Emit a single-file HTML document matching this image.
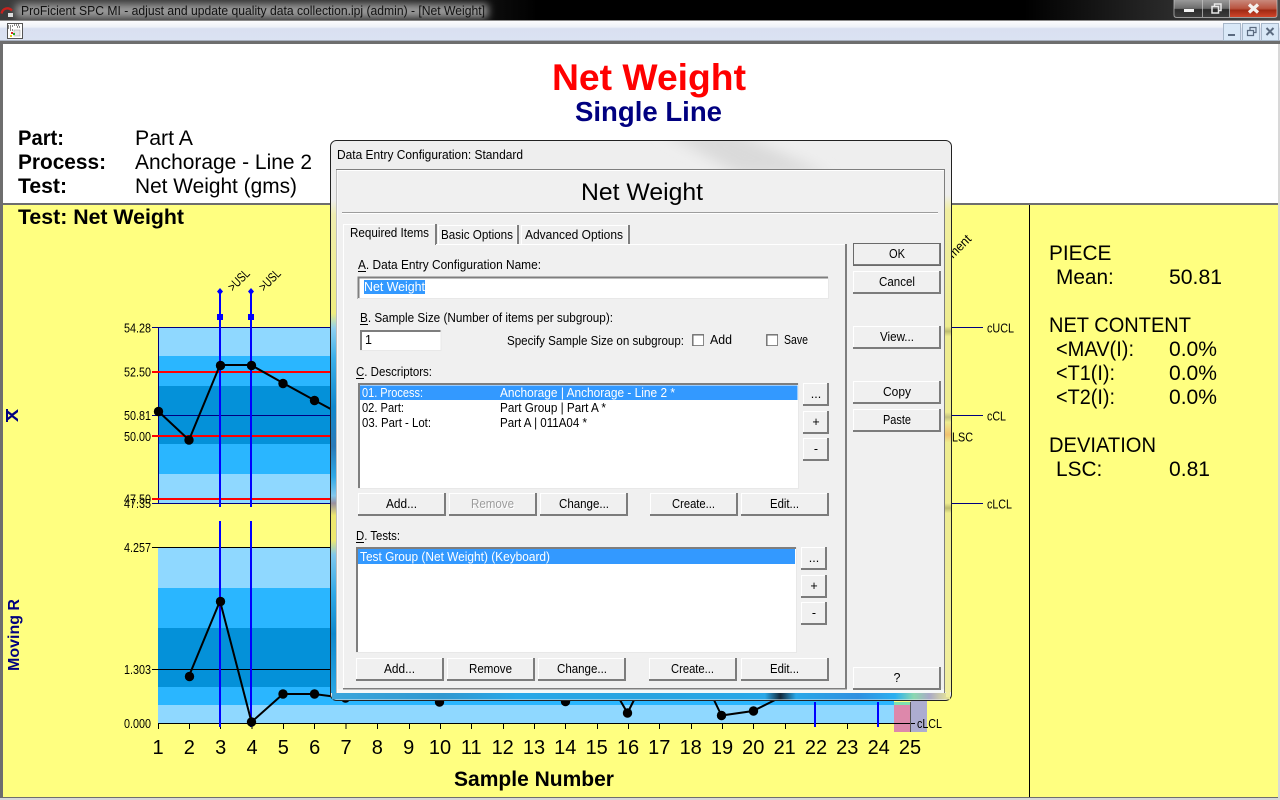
<!DOCTYPE html>
<html lang="en">
<head>
<meta charset="utf-8">
<title>ProFicient SPC MI - Net Weight</title>
<style>
html,body{margin:0;padding:0;width:1280px;height:800px;overflow:hidden;background:#fff}
svg{display:block;position:absolute;left:0;top:0}
text{font-family:"Liberation Sans",sans-serif;white-space:pre}
.d{font-size:12.5px;fill:#000}
.c{text-anchor:middle}
.ax{font-size:13px;fill:#000}
.big{font-size:20.8px;fill:#000}
.r{font-size:20.8px;fill:#000}
.n{font-size:20px;fill:#000;text-anchor:middle}
.b{font-weight:bold}
</style>
</head>
<body>
<svg width="1280" height="800" viewBox="0 0 1280 800" xmlns="http://www.w3.org/2000/svg">
<defs>
<linearGradient id="tb" x1="0" x2="1" y1="0" y2="0">
<stop offset="0" stop-color="#3c3c3c"/><stop offset=".3" stop-color="#2a2a2a"/><stop offset=".42" stop-color="#000"/><stop offset=".8" stop-color="#000"/><stop offset="1" stop-color="#4a4a4a"/>
</linearGradient>
<linearGradient id="mb" x1="0" x2="0" y1="0" y2="1">
<stop offset="0" stop-color="#fbfcfe"/><stop offset=".3" stop-color="#eef1f8"/><stop offset=".38" stop-color="#d9e0f1"/><stop offset="1" stop-color="#dbe2f2"/>
</linearGradient>
<linearGradient id="wb" x1="0" x2="0" y1="0" y2="1">
<stop offset="0" stop-color="#9a9a9a"/><stop offset=".5" stop-color="#6c6c6c"/><stop offset=".55" stop-color="#2c2c2c"/><stop offset="1" stop-color="#3c3c3c"/>
</linearGradient>
<linearGradient id="wc" x1="0" x2="0" y1="0" y2="1">
<stop offset="0" stop-color="#c9897c"/><stop offset=".5" stop-color="#b9533f"/><stop offset=".6" stop-color="#a02a14"/><stop offset="1" stop-color="#d0452a"/>
</linearGradient>
<linearGradient id="ls" x1="0" x2="0" y1="200" y2="693" gradientUnits="userSpaceOnUse">
<stop offset="0" stop-color="#eeeeee"/><stop offset=".03" stop-color="#efedb0"/><stop offset=".23" stop-color="#f0ee80"/><stop offset=".26" stop-color="#8fd0f0"/><stop offset=".32" stop-color="#3cb0ea"/><stop offset=".42" stop-color="#1288cc"/><stop offset=".5" stop-color="#2a7ab8"/><stop offset=".56" stop-color="#2ea8e6"/><stop offset=".6" stop-color="#84c8ec"/><stop offset=".615" stop-color="#9a90a0"/><stop offset=".64" stop-color="#eee870"/><stop offset=".69" stop-color="#eee870"/><stop offset=".72" stop-color="#80c8ee"/><stop offset=".8" stop-color="#2fa8e6"/><stop offset=".88" stop-color="#0f88cc"/><stop offset="1" stop-color="#2aa6e4"/>
</linearGradient>
<linearGradient id="rs" x1="0" x2="0" y1="195" y2="700" gradientUnits="userSpaceOnUse">
<stop offset="0" stop-color="#eeeeee"/><stop offset=".03" stop-color="#f0eea0"/><stop offset=".26" stop-color="#eeec90"/><stop offset=".27" stop-color="#bdbb70"/><stop offset=".28" stop-color="#eeec90"/><stop offset=".43" stop-color="#eeec90"/><stop offset=".44" stop-color="#c2c080"/><stop offset=".45" stop-color="#eeec90"/><stop offset=".475" stop-color="#f0c070"/><stop offset=".49" stop-color="#eeec90"/><stop offset=".61" stop-color="#eeec90"/><stop offset=".62" stop-color="#bdbb70"/><stop offset=".63" stop-color="#eeec90"/><stop offset="1" stop-color="#f0eea0"/>
</linearGradient>
<linearGradient id="bs" x1="331" x2="951" y1="0" y2="0" gradientUnits="userSpaceOnUse">
<stop offset="0" stop-color="#3aa6dc"/><stop offset=".18" stop-color="#2f98d0"/><stop offset=".3" stop-color="#2aa8e8"/><stop offset=".5" stop-color="#2aa4e0"/><stop offset=".7" stop-color="#2aa8e8"/><stop offset=".725" stop-color="#10283a"/><stop offset=".75" stop-color="#2aa8e8"/><stop offset=".85" stop-color="#2f90e0"/><stop offset=".91" stop-color="#2ab0f0"/><stop offset=".94" stop-color="#8cd8b0"/><stop offset=".965" stop-color="#aaaac8"/><stop offset="1" stop-color="#eeec90"/>
</linearGradient>
<filter id="bl" x="-20%" y="-60%" width="140%" height="220%"><feGaussianBlur stdDeviation="4"/></filter>
<filter id="bl2" x="-30%" y="-60%" width="160%" height="220%"><feGaussianBlur stdDeviation="7"/></filter>
<clipPath id="dtop"><rect x="331" y="141" width="620" height="28"/></clipPath>
<g id="btn">
<rect width="88" height="23" fill="#f0f0f0"/>
<path d="M0 0H88V1H1V23H0Z" fill="#fff"/>
<path d="M0 23V21H86V0H88V23Z" fill="#7c7c7c"/>
</g>
<g id="sb">
<rect width="26" height="23" fill="#f0f0f0"/>
<path d="M0 0H26V1H1V23H0Z" fill="#fff"/>
<path d="M0 23V21H24V0H26V23Z" fill="#7c7c7c"/>
</g>
</defs>

<!-- Title bar -->
<rect x="0" y="0" width="1280" height="21" fill="url(#tb)"/>
<rect x="16" y="4" width="472" height="14" fill="#9a9a9a" filter="url(#bl)"/>
<path d="M1.500 13.500C2.500 8.500 8 6.500 12 10.500" fill="none" stroke="#c8211d" stroke-width="2.400"/>
<rect x="8" y="13" width="5" height="4" fill="#dcdcdc"/>
<text x="21" y="15" font-size="12.500" fill="#111" textLength="464" lengthAdjust="spacingAndGlyphs">ProFicient SPC MI - adjust and update quality data collection.ipj (admin) - [Net Weight]</text>
<rect x="1174" y="0" width="29" height="17" fill="url(#wb)"/>
<rect x="1203" y="0" width="27" height="17" fill="url(#wb)"/>
<rect x="1230" y="0" width="47" height="17" fill="url(#wc)"/>
<path d="M1174 0V15Q1174 17.500 1177 17.500H1274Q1277 17.500 1277 15V0M1202.500 0V17M1229.500 0V17" fill="none" stroke="#c8c8c8" stroke-opacity=".7"/>
<rect x="1184" y="9" width="10" height="3" fill="#f2f2f2"/>
<path d="M1212 6.500h6.500v6.500h-6.500zM1214.500 6.500v-2.500h6.500v6.500h-2.500" fill="none" stroke="#e8e8e8" stroke-width="1.500"/>
<path d="M1249 4.500l9 8M1258 4.500l-9 8" stroke="#f4f0ee" stroke-width="3.200"/>
<rect x="0" y="20" width="1280" height="1" fill="#8a8a8a"/>

<!-- Menu bar -->
<rect x="0" y="21" width="1280" height="20" fill="url(#mb)"/>
<rect x="0" y="40" width="1280" height="1" fill="#a9b1c0"/>
<rect x="7.500" y="23.500" width="15" height="15" fill="#fff" stroke="#555"/>
<path d="M8 26h5M8 28h3M14 25h6M10 30h4M17 27h3" stroke="#111" stroke-dasharray="1 1"/>
<rect x="14" y="30" width="6" height="6" fill="#e8e8e8" stroke="#999" stroke-width=".5"/>
<rect x="11" y="32" width="2" height="2" fill="#d22"/><rect x="13" y="33" width="2" height="2" fill="#2a2"/><rect x="10" y="35" width="2" height="2" fill="#dc2"/>
<g fill="#d9e8f7" stroke="#a7b7c9">
<rect x="1223.500" y="23.500" width="17" height="17"/>
<rect x="1242.500" y="23.500" width="17" height="17"/>
<rect x="1261.500" y="23.500" width="17" height="17"/>
</g>
<rect x="1228" y="34" width="7" height="2" fill="#5b6b80"/>
<path d="M1247.500 30.500h6v5h-6zM1250 30v-2.500h6v5h-2.500" fill="none" stroke="#5b6b80" stroke-width="1.200"/>
<path d="M1266.500 28l7 7M1273.500 28l-7 7" stroke="#5b6b80" stroke-width="2"/>

<!-- Workspace -->
<rect x="0" y="41" width="1280" height="759" fill="#6e6e6e"/>
<rect x="3" y="44" width="1275" height="159" fill="#fff"/>
<rect x="3" y="205" width="1275" height="592" fill="#ffff80"/>
<rect x="1278" y="44" width="2" height="756" fill="#d8d8d8"/>
<rect x="0" y="798" width="1280" height="2" fill="#d8d8d8"/>
<rect x="1029" y="205" width="1" height="592" fill="#000"/>

<!-- Header -->
<text x="552" y="90" font-size="37.500" font-weight="bold" fill="#ff0000" textLength="194" lengthAdjust="spacingAndGlyphs">Net Weight</text>
<text x="575" y="121" font-size="28" font-weight="bold" fill="#000080" textLength="147" lengthAdjust="spacingAndGlyphs">Single Line</text>
<text x="18" y="145" class="big b" textLength="46" lengthAdjust="spacingAndGlyphs">Part:</text>
<text x="135" y="145" class="big" textLength="58" lengthAdjust="spacingAndGlyphs">Part A</text>
<text x="18" y="169" class="big b" textLength="88" lengthAdjust="spacingAndGlyphs">Process:</text>
<text x="135" y="169" class="big" textLength="177" lengthAdjust="spacingAndGlyphs">Anchorage - Line 2</text>
<text x="18" y="193" class="big b" textLength="49" lengthAdjust="spacingAndGlyphs">Test:</text>
<text x="135" y="193" class="big" textLength="162" lengthAdjust="spacingAndGlyphs">Net Weight (gms)</text>
<text x="18" y="224" font-size="21" class="b" fill="#000" textLength="166" lengthAdjust="spacingAndGlyphs">Test: Net Weight</text>

<!-- Upper chart -->
<rect x="158" y="327" width="787" height="29" fill="#8fd8ff"/>
<rect x="158" y="356" width="787" height="30" fill="#2ab6ff"/>
<rect x="158" y="386" width="787" height="58" fill="#0491d9"/>
<rect x="158" y="444" width="787" height="30" fill="#2ab6ff"/>
<rect x="158" y="474" width="787" height="29" fill="#8fd8ff"/>
<path d="M152 327.500H945M152 415.500H945M152 503.500H945M158.500 327V504" stroke="#000080" fill="none"/>
<path d="M152 372H945M152 436H945M152 499H945" stroke="#ff0000" stroke-width="2" fill="none"/>

<!-- Lower chart backgrounds -->
<rect x="158" y="547" width="736" height="41" fill="#8fd8ff"/>
<rect x="158" y="588" width="736" height="40" fill="#2ab6ff"/>
<rect x="158" y="628" width="736" height="59" fill="#0491d9"/>
<rect x="158" y="687" width="736" height="18" fill="#2ab6ff"/>
<rect x="158" y="705" width="736" height="18" fill="#8fd8ff"/>
<rect x="894" y="702" width="16.500" height="3" fill="#80e0b0"/>
<rect x="894" y="705" width="16.500" height="27" fill="#dd88ab"/>
<rect x="910.500" y="700" width="16.500" height="32" fill="#adadd0"/>
<path d="M152 547.500H900M152 669.500H900M158 723.500H915" stroke="#000" fill="none"/>
<path d="M910.500 702V732" stroke="#555"/>
<path d="M158.500 723V729M189.500 723V729M220.500 723V729M252 723V729M283.500 723V729M314.500 723V729M346 723V729M377.500 723V729M409.500 723V729M440.500 723V729M471.500 723V729M503.500 723V729M534.500 723V729M565.500 723V729M597.500 723V729M628.500 723V729M659.500 723V729M691.500 723V729M722.500 723V729M753.500 723V729M785.500 723V729M847.500 723V729" stroke="#000"/>

<!-- Blue event lines (under the data lines) -->
<path d="M220 291V507M251 291V507M220 521V727M251 521V727" stroke="#0000ff" stroke-width="2" fill="none"/>
<path d="M815 702V727M878 702V727" stroke="#0000ff" stroke-width="2"/>
<path d="M220 288l3 3.500-3 3.500-3-3.500zM251 288l3 3.500-3 3.500-3-3.500z" fill="#0000ff"/>
<rect x="217" y="314" width="6" height="6" fill="#0000ff"/><rect x="248" y="314" width="6" height="6" fill="#0000ff"/>

<!-- Upper data -->
<polyline points="158,411 189,440 220,365 251,365 283,383 314,400 340,414" fill="none" stroke="#000" stroke-width="2"/>
<g fill="#000"><circle cx="158.500" cy="411.500" r="4.700"/><circle cx="189" cy="440" r="4.700"/><circle cx="220.500" cy="365.500" r="4.700"/><circle cx="251.500" cy="365.500" r="4.700"/><circle cx="283" cy="383.500" r="4.700"/><circle cx="314.500" cy="400.500" r="4.700"/></g>

<text transform="translate(233 292) rotate(-45)" class="ax" textLength="25" lengthAdjust="spacingAndGlyphs">&gt;USL</text>
<text transform="translate(264 292) rotate(-45)" class="ax" textLength="25" lengthAdjust="spacingAndGlyphs">&gt;USL</text>
<text transform="translate(953 259) rotate(-45)" class="ax" textLength="27" lengthAdjust="spacingAndGlyphs">ment</text>
<text x="124" y="332.500" class="ax" textLength="27" lengthAdjust="spacingAndGlyphs">54.28</text>
<text x="124" y="376.500" class="ax" textLength="27" lengthAdjust="spacingAndGlyphs">52.50</text>
<text x="124" y="420" class="ax" textLength="27" lengthAdjust="spacingAndGlyphs">50.81</text>
<text x="124" y="441" class="ax" textLength="27" lengthAdjust="spacingAndGlyphs">50.00</text>
<text x="124" y="503.500" class="ax" textLength="27" lengthAdjust="spacingAndGlyphs">47.50</text>
<text x="124" y="508" class="ax" textLength="27" lengthAdjust="spacingAndGlyphs">47.35</text>
<text transform="translate(18 422) rotate(-90)" font-size="17" font-weight="bold" fill="#000080" textLength="13" lengthAdjust="spacingAndGlyphs">X</text>
<rect x="6" y="409" width="2" height="13" fill="#000080"/>
<path d="M951 327.500H983M951 415.500H983M951 503.500H983" stroke="#000080"/>
<text x="987" y="332.500" class="ax" textLength="27" lengthAdjust="spacingAndGlyphs">cUCL</text>
<text x="987" y="420.500" class="ax" textLength="19" lengthAdjust="spacingAndGlyphs">cCL</text>
<text x="987" y="508.500" class="ax" textLength="25" lengthAdjust="spacingAndGlyphs">cLCL</text>
<text x="952" y="441.500" class="ax" textLength="21" lengthAdjust="spacingAndGlyphs">LSC</text>

<!-- Lower data -->
<polyline points="189,676 220,601 251.500,722 283,694 314,694 345,698" fill="none" stroke="#000" stroke-width="2"/>
<path d="M620 700L627.500 713L634 700M714 700L721.500 715.500L753 711L775 700" fill="none" stroke="#000" stroke-width="2"/>
<g fill="#000"><circle cx="189.500" cy="676.500" r="4.700"/><circle cx="220.500" cy="601.500" r="4.700"/><circle cx="251.500" cy="722" r="4.700"/><circle cx="283" cy="694" r="4.700"/><circle cx="314.500" cy="694" r="4.700"/><circle cx="345.500" cy="698" r="4.700"/><circle cx="439.500" cy="702" r="4.700"/><circle cx="565.500" cy="701.500" r="4.700"/><circle cx="627.500" cy="713" r="4.700"/><circle cx="721.500" cy="715.500" r="4.700"/><circle cx="753.500" cy="711" r="4.700"/></g>
<text x="124" y="552" class="ax" textLength="27" lengthAdjust="spacingAndGlyphs">4.257</text>
<text x="124" y="674" class="ax" textLength="27" lengthAdjust="spacingAndGlyphs">1.303</text>
<text x="124" y="728" class="ax" textLength="27" lengthAdjust="spacingAndGlyphs">0.000</text>
<text x="917" y="728" class="ax" textLength="25" lengthAdjust="spacingAndGlyphs">cLCL</text>
<text transform="translate(19 671) rotate(-90)" font-size="16" font-weight="bold" fill="#000080" textLength="72" lengthAdjust="spacingAndGlyphs">Moving R</text>
<text x="158" y="754" class="n">1</text><text x="189.300" y="754" class="n">2</text><text x="220.700" y="754" class="n">3</text><text x="252" y="754" class="n">4</text><text x="283.300" y="754" class="n">5</text><text x="314.700" y="754" class="n">6</text><text x="346" y="754" class="n">7</text><text x="377.300" y="754" class="n">8</text><text x="408.700" y="754" class="n">9</text><text x="440" y="754" class="n">10</text><text x="471.300" y="754" class="n">11</text><text x="502.700" y="754" class="n">12</text><text x="534" y="754" class="n">13</text><text x="565.300" y="754" class="n">14</text><text x="596.700" y="754" class="n">15</text><text x="628" y="754" class="n">16</text><text x="659.300" y="754" class="n">17</text><text x="690.700" y="754" class="n">18</text><text x="722" y="754" class="n">19</text><text x="753.300" y="754" class="n">20</text><text x="784.700" y="754" class="n">21</text><text x="816" y="754" class="n">22</text><text x="847.300" y="754" class="n">23</text><text x="878.700" y="754" class="n">24</text><text x="910" y="754" class="n">25</text>
<text x="454" y="786" font-size="21" font-weight="bold" fill="#000" textLength="160" lengthAdjust="spacingAndGlyphs">Sample Number</text>

<!-- Right stats -->
<text x="1049" y="260" class="r">PIECE</text>
<text x="1056" y="284" class="r">Mean:</text><text x="1169" y="284" class="r" textLength="53" lengthAdjust="spacingAndGlyphs">50.81</text>
<text x="1049" y="332" class="r" textLength="142" lengthAdjust="spacingAndGlyphs">NET CONTENT</text>
<text x="1056" y="356" class="r" textLength="78" lengthAdjust="spacingAndGlyphs">&lt;MAV(I):</text><text x="1169" y="356" class="r" textLength="48" lengthAdjust="spacingAndGlyphs">0.0%</text>
<text x="1056" y="380" class="r" textLength="59" lengthAdjust="spacingAndGlyphs">&lt;T1(I):</text><text x="1169" y="380" class="r" textLength="48" lengthAdjust="spacingAndGlyphs">0.0%</text>
<text x="1056" y="404" class="r" textLength="59" lengthAdjust="spacingAndGlyphs">&lt;T2(I):</text><text x="1169" y="404" class="r" textLength="48" lengthAdjust="spacingAndGlyphs">0.0%</text>
<text x="1049" y="452" class="r" textLength="107" lengthAdjust="spacingAndGlyphs">DEVIATION</text>
<text x="1056" y="476" class="r">LSC:</text><text x="1169" y="476" class="r" textLength="41" lengthAdjust="spacingAndGlyphs">0.81</text>

<!-- Dialog frame -->
<rect x="330.500" y="140.500" width="621" height="560" rx="6" ry="6" fill="#eeeeee" stroke="#222"/>
<g clip-path="url(#dtop)"><path d="M660 130L730 130L830 175L740 175Z" fill="#dadada" filter="url(#bl2)"/></g>
<rect x="331" y="198" width="5" height="495" fill="url(#ls)"/>
<rect x="945" y="195" width="6" height="497" fill="url(#rs)"/>
<rect x="332" y="693" width="618" height="6.500" fill="url(#bs)"/>
<rect x="946" y="692" width="4" height="5" fill="#f0eea0"/>
<text x="337" y="159" class="d" textLength="186" lengthAdjust="spacingAndGlyphs">Data Entry Configuration: Standard</text>

<!-- Dialog inner panel -->
<rect x="336" y="169" width="609" height="524" fill="#f0f0f0"/>
<rect x="337" y="689" width="607" height="4" fill="#f6f8f8"/>
<path d="M336.500 693V169.500H944.500V693" fill="none" stroke="#7e7e7e"/>
<path d="M337 693V170.500H944" fill="none" stroke="#fff"/>
<text x="581" y="200" font-size="24.500" fill="#000" textLength="122" lengthAdjust="spacingAndGlyphs">Net Weight</text>
<rect x="342" y="212" width="596" height="1" fill="#9d9d9d"/>
<rect x="342" y="213" width="596" height="1" fill="#fff"/>

<!-- Tabs and page -->
<path d="M343.500 245V224.500H435.500V245" fill="#f0f0f0" stroke="#fff"/>
<rect x="435" y="224" width="2" height="21" fill="#7e7e7e"/>
<path d="M438.500 245V225.500H517V245" fill="#f0f0f0" stroke="#fff"/>
<rect x="517" y="225" width="2" height="20" fill="#7e7e7e"/>
<path d="M521.500 245V225.500H628V245" fill="#f0f0f0" stroke="#fff"/>
<rect x="628" y="225" width="2" height="20" fill="#7e7e7e"/>
<path d="M436 244.500H845" stroke="#fff"/>
<rect x="343" y="245" width="1" height="443" fill="#fff"/>
<rect x="845" y="244" width="2" height="445" fill="#7e7e7e"/>
<rect x="343" y="688" width="504" height="1.500" fill="#7e7e7e"/>
<text x="350" y="237" class="d" textLength="79" lengthAdjust="spacingAndGlyphs">Required Items</text>
<text x="441" y="239" class="d" textLength="72" lengthAdjust="spacingAndGlyphs">Basic Options</text>
<text x="525" y="239" class="d" textLength="98" lengthAdjust="spacingAndGlyphs">Advanced Options</text>

<!-- A -->
<text x="358" y="269" class="d" textLength="183" lengthAdjust="spacingAndGlyphs">A. Data Entry Configuration Name:</text>
<rect x="358" y="271" width="8" height="1" fill="#000"/>
<rect x="358" y="277" width="471" height="22" fill="#fff"/>
<path d="M358.500 299V277.500H828" fill="none" stroke="#7e7e7e" stroke-width="2"/>
<path d="M358 298.500H828.500V277" fill="none" stroke="#e8e8e8"/>
<rect x="364" y="280" width="61" height="14" fill="#3399ff"/>
<text x="364" y="291" class="d" style="fill:#fff" textLength="61" lengthAdjust="spacingAndGlyphs">Net Weight</text>

<!-- B -->
<text x="360" y="322" class="d" textLength="253" lengthAdjust="spacingAndGlyphs">B. Sample Size (Number of items per subgroup):</text>
<rect x="360" y="324" width="8" height="1" fill="#000"/>
<rect x="360" y="330" width="81" height="21" fill="#fff"/>
<path d="M361 351V331H441" fill="none" stroke="#7e7e7e" stroke-width="2"/>
<path d="M360 350.500H441V330" fill="none" stroke="#e8e8e8"/>
<text x="365" y="344" class="d">1</text>
<text x="507" y="345" class="d" textLength="177" lengthAdjust="spacingAndGlyphs">Specify Sample Size on subgroup:</text>
<rect x="692.500" y="334.500" width="11" height="11" fill="#fff" stroke="#888"/>
<path d="M693 335H704M693 335V346" stroke="#6a6a6a" fill="none"/>
<text x="710" y="344" class="d" textLength="22" lengthAdjust="spacingAndGlyphs">Add</text>
<rect x="766.500" y="334.500" width="11" height="11" fill="#fff" stroke="#888"/>
<path d="M767 335H778M767 335V346" stroke="#6a6a6a" fill="none"/>
<text x="784" y="344" class="d" textLength="24" lengthAdjust="spacingAndGlyphs">Save</text>

<!-- C -->
<text x="356" y="376" class="d" textLength="76" lengthAdjust="spacingAndGlyphs">C. Descriptors:</text>
<rect x="356" y="378" width="8" height="1" fill="#000"/>
<rect x="358" y="383" width="441" height="106" fill="#fff"/>
<path d="M359 489V384H799" fill="none" stroke="#7e7e7e" stroke-width="2"/>
<path d="M358 488.500H798.500V383" fill="none" stroke="#e8e8e8"/>
<rect x="360" y="385.500" width="437.500" height="14.500" fill="#3399ff"/>
<text x="362" y="397" class="d" style="fill:#fff" textLength="61" lengthAdjust="spacingAndGlyphs">01. Process:</text>
<text x="500" y="397" class="d" style="fill:#fff" textLength="175" lengthAdjust="spacingAndGlyphs">Anchorage | Anchorage - Line 2 *</text>
<text x="362" y="412" class="d" textLength="42" lengthAdjust="spacingAndGlyphs">02. Part:</text>
<text x="500" y="412" class="d" textLength="106" lengthAdjust="spacingAndGlyphs">Part Group | Part A *</text>
<text x="362" y="427" class="d" textLength="69" lengthAdjust="spacingAndGlyphs">03. Part - Lot:</text>
<text x="500" y="427" class="d" textLength="87" lengthAdjust="spacingAndGlyphs">Part A | 011A04 *</text>
<use href="#btn" x="358" y="493"/><use href="#btn" x="449" y="493"/><use href="#btn" x="540" y="493"/><use href="#btn" x="650" y="493"/><use href="#btn" x="741" y="493"/>
<text x="386" y="508" class="d" textLength="31" lengthAdjust="spacingAndGlyphs">Add...</text>
<text x="472" y="509" class="d" style="fill:#fff" textLength="43" lengthAdjust="spacingAndGlyphs">Remove</text>
<text x="471" y="508" class="d" style="fill:#9c9c9c" textLength="43" lengthAdjust="spacingAndGlyphs">Remove</text>
<text x="559" y="508" class="d" textLength="50" lengthAdjust="spacingAndGlyphs">Change...</text>
<text x="672" y="508" class="d" textLength="43" lengthAdjust="spacingAndGlyphs">Create...</text>
<text x="770" y="508" class="d" textLength="29" lengthAdjust="spacingAndGlyphs">Edit...</text>
<use href="#sb" x="803" y="383"/><use href="#sb" x="803" y="411"/><use href="#sb" x="803" y="438"/>
<text x="816" y="398" class="d c">...</text><text x="816" y="426" class="d c">+</text><text x="816" y="453" class="d c">-</text>

<!-- D -->
<text x="356" y="540" class="d" textLength="44" lengthAdjust="spacingAndGlyphs">D. Tests:</text>
<rect x="356" y="542" width="8" height="1" fill="#000"/>
<rect x="356" y="547" width="441" height="106" fill="#fff"/>
<path d="M357 653V548H797" fill="none" stroke="#7e7e7e" stroke-width="2"/>
<path d="M356 652.500H796.500V547" fill="none" stroke="#e8e8e8"/>
<rect x="358" y="549" width="437" height="15" fill="#3399ff"/>
<text x="360" y="561" class="d" style="fill:#fff" textLength="190" lengthAdjust="spacingAndGlyphs">Test Group (Net Weight) (Keyboard)</text>
<use href="#btn" x="356" y="658"/><use href="#btn" x="447" y="658"/><use href="#btn" x="538" y="658"/><use href="#btn" x="649" y="658"/><use href="#btn" x="741" y="658"/>
<text x="384" y="673" class="d" textLength="31" lengthAdjust="spacingAndGlyphs">Add...</text>
<text x="469" y="673" class="d" textLength="43" lengthAdjust="spacingAndGlyphs">Remove</text>
<text x="557" y="673" class="d" textLength="50" lengthAdjust="spacingAndGlyphs">Change...</text>
<text x="671" y="673" class="d" textLength="43" lengthAdjust="spacingAndGlyphs">Create...</text>
<text x="770" y="673" class="d" textLength="29" lengthAdjust="spacingAndGlyphs">Edit...</text>
<use href="#sb" x="801" y="547"/><use href="#sb" x="801" y="575"/><use href="#sb" x="801" y="602"/>
<text x="814" y="562" class="d c">...</text><text x="814" y="590" class="d c">+</text><text x="814" y="617" class="d c">-</text>

<!-- Right buttons -->
<use href="#btn" x="853" y="243"/><use href="#btn" x="853" y="271"/><use href="#btn" x="853" y="326"/><use href="#btn" x="853" y="381"/><use href="#btn" x="853" y="409"/><use href="#btn" x="853" y="667"/>
<rect x="853.500" y="243.500" width="87" height="22" fill="none" stroke="#6a6a6a"/>
<text x="889" y="258" class="d" textLength="16" lengthAdjust="spacingAndGlyphs">OK</text>
<text x="879" y="286" class="d" textLength="36" lengthAdjust="spacingAndGlyphs">Cancel</text>
<text x="880" y="341" class="d" textLength="34" lengthAdjust="spacingAndGlyphs">View...</text>
<text x="883" y="396" class="d" textLength="28" lengthAdjust="spacingAndGlyphs">Copy</text>
<text x="883" y="424" class="d" textLength="28" lengthAdjust="spacingAndGlyphs">Paste</text>
<text x="897" y="682" class="d c">?</text>
</svg>
</body>
</html>
